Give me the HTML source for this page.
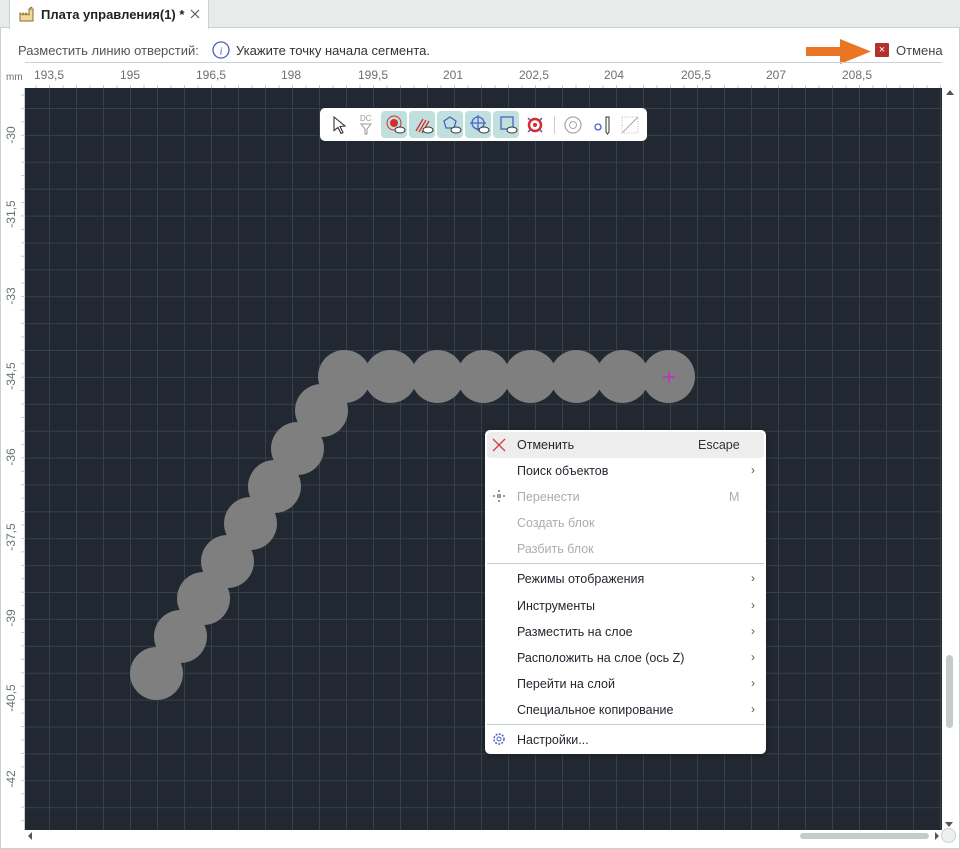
<!DOCTYPE html>
<html><head><meta charset="utf-8"><style>
*{margin:0;padding:0;box-sizing:border-box}
body{width:960px;height:849px;overflow:hidden;background:#fff;font-family:"Liberation Sans","DejaVu Sans",sans-serif;position:relative;color:#333}
.abs{position:absolute}
#tabbar{left:0;top:0;width:960px;height:28px;background:#e9ebea;border-bottom:1px solid #c9d2d2}
#tab{left:9px;top:0;width:200px;height:29px;background:#fff;border-left:1px solid #c9d2d2;border-right:1px solid #c9d2d2}
#frame{left:0;top:28px;width:960px;height:821px;border:1px solid #c9d2d2;border-top:none}
.txt{font-size:13px;white-space:nowrap}
#rtop{left:25px;top:62px;width:917px;height:26px;border-top:1px solid #c9d2d2;
 background:repeating-linear-gradient(90deg,#c4cbcb 0 1px,transparent 1px 13.5px);background-size:13.5px 3px;background-position:10.5px bottom;background-repeat:repeat-x}
#rleft{left:0;top:88px;width:25px;height:742px;border-right:1px solid #c9d2d2;
 background:repeating-linear-gradient(180deg,#c4cbcb 0 1px,transparent 1px 13.45px);background-size:3px 13.45px;background-position:right 6.5px;background-repeat:repeat-y}
#canvas{left:25px;top:88px;width:917px;height:742px;background-color:#222831;
 background-image:linear-gradient(90deg,#384048 1px,transparent 1px),linear-gradient(180deg,#384048 1px,transparent 1px);
 background-size:27px 26.9px;background-position:24px 20px;overflow:hidden}
.lab{font-size:12px;color:#6a7173}
.vl{transform:rotate(-90deg);transform-origin:center}
.c{position:absolute;width:53px;height:53px;border-radius:50%;background:#7f7f7f}
#menu{left:485px;top:430px;width:281px;height:324px;background:#fff;border-radius:5px;box-shadow:0 1px 4px rgba(0,0,0,.4)}
.mi{position:absolute;left:32px;font-size:12.5px;color:#2b2430}
.dis{color:#a9aeae}
.arr{position:absolute;left:266px;font-size:12px;color:#555}
#tb{left:320px;top:108px;width:327px;height:33px;background:#fff;border-radius:5px}
.tbb{position:absolute;top:3px;width:26px;height:27px;background:#bfe0dc;border-radius:4px}
</style></head><body>
<div id="tabbar" class="abs"></div>
<div id="tab" class="abs">
 <svg class="abs" style="left:9px;top:6px" width="16" height="16" viewBox="0 0 16 16"><path d="M1 15V7l3 2V7l3 2V7l3 2V3h4v12z" fill="#f2d9a0" stroke="#8a6a2a" stroke-width="1"/><path d="M11 3c0-2 2-2 2-1" fill="none" stroke="#8a6a2a"/></svg>
 <div class="abs txt" style="left:31px;top:7px;font-weight:bold;color:#222">Плата управления(1) *</div>
 <svg class="abs" style="left:180px;top:9px" width="10" height="10"><path d="M1 1l8 8M9 1L1 9" stroke="#555" stroke-width="1.1"/></svg>
</div>
<div id="frame" class="abs"></div>
<div class="abs txt" style="left:18px;top:43px;color:#555">Разместить линию отверстий:</div>
<svg class="abs" style="left:212px;top:41px" width="18" height="18"><circle cx="9" cy="9" r="8" fill="none" stroke="#4a5fc1" stroke-width="1.3"/><text x="9" y="13.5" font-size="11" font-style="italic" text-anchor="middle" fill="#4a5fc1" font-family="Liberation Serif">i</text></svg>
<div class="abs txt" style="left:236px;top:43px;color:#333">Укажите точку начала сегмента.</div>
<svg class="abs" style="left:806px;top:39px" width="66" height="25"><path d="M0 8h34V0l31 12.5L34 25v-8H0z" fill="#ea7524"/></svg>
<div class="abs" style="left:875px;top:43px;width:14px;height:14px;background:#b3302e;border-radius:1px;color:#fff;font-size:11px;line-height:14px;text-align:center">×</div>
<div class="abs txt" style="left:896px;top:43px;color:#444">Отмена</div>

<div id="rtop" class="abs"></div>
<div id="rleft" class="abs"></div>
<div class="abs lab" style="left:6px;top:72px;font-size:10px">mm</div>
<div class="abs lab" style="left:34px;top:68px">193,5</div>
<div class="abs lab" style="left:120px;top:68px">195</div>
<div class="abs lab" style="left:196px;top:68px">196,5</div>
<div class="abs lab" style="left:281px;top:68px">198</div>
<div class="abs lab" style="left:358px;top:68px">199,5</div>
<div class="abs lab" style="left:443px;top:68px">201</div>
<div class="abs lab" style="left:519px;top:68px">202,5</div>
<div class="abs lab" style="left:604px;top:68px">204</div>
<div class="abs lab" style="left:681px;top:68px">205,5</div>
<div class="abs lab" style="left:766px;top:68px">207</div>
<div class="abs lab" style="left:842px;top:68px">208,5</div>
<div class="abs lab vl" style="left:-4px;top:128px;width:30px;text-align:center">-30</div>
<div class="abs lab vl" style="left:-4px;top:207px;width:30px;text-align:center">-31,5</div>
<div class="abs lab vl" style="left:-4px;top:289px;width:30px;text-align:center">-33</div>
<div class="abs lab vl" style="left:-4px;top:369px;width:30px;text-align:center">-34,5</div>
<div class="abs lab vl" style="left:-4px;top:450px;width:30px;text-align:center">-36</div>
<div class="abs lab vl" style="left:-4px;top:530px;width:30px;text-align:center">-37,5</div>
<div class="abs lab vl" style="left:-4px;top:611px;width:30px;text-align:center">-39</div>
<div class="abs lab vl" style="left:-4px;top:691px;width:30px;text-align:center">-40,5</div>
<div class="abs lab vl" style="left:-4px;top:772px;width:30px;text-align:center">-42</div>

<div id="canvas" class="abs">
 <div class="c" style="left:293px;top:262px"></div>
 <div class="c" style="left:339px;top:262px"></div>
 <div class="c" style="left:386px;top:262px"></div>
 <div class="c" style="left:432px;top:262px"></div>
 <div class="c" style="left:479px;top:262px"></div>
 <div class="c" style="left:525px;top:262px"></div>
 <div class="c" style="left:571px;top:262px"></div>
 <div class="c" style="left:617px;top:262px"></div>
 <div class="c" style="left:270px;top:296px"></div>
 <div class="c" style="left:246px;top:334px"></div>
 <div class="c" style="left:223px;top:372px"></div>
 <div class="c" style="left:199px;top:409px"></div>
 <div class="c" style="left:176px;top:447px"></div>
 <div class="c" style="left:152px;top:484px"></div>
 <div class="c" style="left:129px;top:522px"></div>
 <div class="c" style="left:105px;top:559px"></div>
 <svg class="abs" style="left:637px;top:282px" width="14" height="14"><path d="M7 1v12M1 7h12" stroke="#d11fd1" stroke-width="1.2"/></svg>
</div>

<div id="tb" class="abs">
 <svg class="abs" style="left:12px;top:8px" width="16" height="18"><path d="M2 1l11 9-5 .5 3 6-2 1-3-6-4 3z" fill="#fff" stroke="#333" stroke-width="1.1"/></svg>
 <div class="abs" style="left:40px;top:6px;font-size:8px;color:#999">DC</div>
 <svg class="abs" style="left:40px;top:15px" width="12" height="12"><path d="M1 1h10L7 6v5H5V6z" fill="none" stroke="#999"/></svg>
 <div class="tbb" style="left:61px"></div><div class="tbb" style="left:89px"></div><div class="tbb" style="left:117px"></div><div class="tbb" style="left:145px"></div><div class="tbb" style="left:173px"></div>
 <svg class="abs" style="left:61px;top:3px" width="140" height="27">
  <circle cx="13" cy="12" r="4" fill="#d62c2c"/><circle cx="13" cy="12" r="7" fill="none" stroke="#d62c2c"/>
  <path d="M35 20l7-12M38 21l7-12M41 22l7-12" stroke="#d62c2c" stroke-width="1.3"/>
  <path d="M69 6l6 4-2 7h-8l-2-7z" fill="none" stroke="#4a5fd1" stroke-width="1.3"/>
  <circle cx="97" cy="12" r="6" fill="none" stroke="#4a5fd1" stroke-width="1.3"/><path d="M97 4v16M89 12h16" stroke="#4a5fd1" stroke-width="1.2"/>
  <rect x="120" y="6" width="12" height="12" fill="none" stroke="#4a5fd1" stroke-width="1.3"/>
  <g fill="#fff" stroke="#333"><ellipse cx="19" cy="19" rx="5" ry="3"/><ellipse cx="47" cy="19" rx="5" ry="3"/><ellipse cx="75" cy="19" rx="5" ry="3"/><ellipse cx="103" cy="19" rx="5" ry="3"/><ellipse cx="131" cy="19" rx="5" ry="3"/></g>
 </svg>
 <svg class="abs" style="left:205px;top:7px" width="20" height="20"><path d="M3 3l14 14M17 3L3 17" stroke="#4a5fd1" stroke-width="1.5"/><circle cx="10" cy="10" r="6" fill="#fff" stroke="#d62c2c" stroke-width="2.5"/><circle cx="10" cy="10" r="2" fill="#d62c2c"/></svg>
 <div class="abs" style="left:234px;top:8px;width:1px;height:18px;background:#ccc"></div>
 <svg class="abs" style="left:243px;top:7px" width="20" height="20"><circle cx="10" cy="10" r="8" fill="none" stroke="#aaa" stroke-width="1.3"/><circle cx="10" cy="10" r="3.5" fill="none" stroke="#aaa"/></svg>
 <svg class="abs" style="left:273px;top:7px" width="20" height="20"><circle cx="5" cy="12" r="3" fill="none" stroke="#4a5fd1" stroke-width="1.3"/><path d="M13 2v15l1.5 2 1.5-2V2z" fill="none" stroke="#333"/></svg>
 <svg class="abs" style="left:300px;top:7px" width="20" height="20"><rect x="2" y="2" width="16" height="16" fill="none" stroke="#bbb" stroke-dasharray="1 1.5"/><path d="M2 18L18 2" stroke="#aaa"/></svg>
</div>

<div id="menu" class="abs">
 <div class="abs" style="left:2px;top:2px;width:277px;height:26px;background:#ecedec;border-radius:4px"></div>
 <svg class="abs" style="left:7px;top:8px" width="14" height="14"><path d="M1 1l12 12M13 1L1 13" stroke="#d0403e" stroke-width="1.3"/></svg>
 <div class="mi" style="top:8px">Отменить</div><div class="abs" style="left:213px;top:8px;font-size:12.5px;color:#333">Escape</div>
 <div class="mi" style="top:34px">Поиск объектов</div><div class="arr" style="top:33px">›</div>
 <svg class="abs" style="left:7px;top:59px" width="14" height="14"><g fill="#999"><rect x="6" y="1" width="2" height="2"/><rect x="6" y="11" width="2" height="2"/><rect x="1" y="6" width="2" height="2"/><rect x="11" y="6" width="2" height="2"/><rect x="5" y="5" width="4" height="4"/></g></svg>
 <div class="mi dis" style="top:60px">Перенести</div><div class="abs dis" style="left:244px;top:60px;font-size:12.5px">M</div>
 <div class="mi dis" style="top:86px">Создать блок</div>
 <div class="mi dis" style="top:112px">Разбить блок</div>
 <div class="abs" style="left:2px;top:133px;width:277px;height:1px;background:#c5cdcd"></div>
 <div class="mi" style="top:142px">Режимы отображения</div><div class="arr" style="top:141px">›</div>
 <div class="mi" style="top:169px">Инструменты</div><div class="arr" style="top:168px">›</div>
 <div class="mi" style="top:195px">Разместить на слое</div><div class="arr" style="top:194px">›</div>
 <div class="mi" style="top:221px">Расположить на слое (ось Z)</div><div class="arr" style="top:220px">›</div>
 <div class="mi" style="top:247px">Перейти на слой</div><div class="arr" style="top:246px">›</div>
 <div class="mi" style="top:273px">Специальное копирование</div><div class="arr" style="top:272px">›</div>
 <div class="abs" style="left:2px;top:294px;width:277px;height:1px;background:#c5cdcd"></div>
 <svg class="abs" style="left:7px;top:302px" width="14" height="14"><circle cx="7" cy="7" r="5" fill="none" stroke="#4a5fc1" stroke-width="1.5" stroke-dasharray="2 1.3"/><circle cx="7" cy="7" r="2" fill="none" stroke="#4a5fc1"/></svg>
 <div class="mi" style="top:303px">Настройки...</div>
</div>

<div class="abs" style="left:946px;top:90px;width:0;height:0;border:4px solid transparent;border-bottom:5px solid #555;border-top:none"></div>
<div class="abs" style="left:946px;top:655px;width:7px;height:73px;background:#c3cccb;border-radius:4px"></div>
<div class="abs" style="left:945px;top:822px;width:0;height:0;border:4px solid transparent;border-top:5px solid #555;border-bottom:none"></div>
<div class="abs" style="left:28px;top:832px;width:0;height:0;border:4px solid transparent;border-right:4px solid #555;border-left:none"></div>
<div class="abs" style="left:800px;top:833px;width:129px;height:6px;background:#c3cccb;border-radius:3px"></div>
<div class="abs" style="left:935px;top:832px;width:0;height:0;border:4px solid transparent;border-left:4px solid #555;border-right:none"></div>
<div class="abs" style="left:941px;top:828px;width:15px;height:15px;border-radius:50%;background:#eef0f0;border:1px solid #c9d2d2"></div>
</body></html>
